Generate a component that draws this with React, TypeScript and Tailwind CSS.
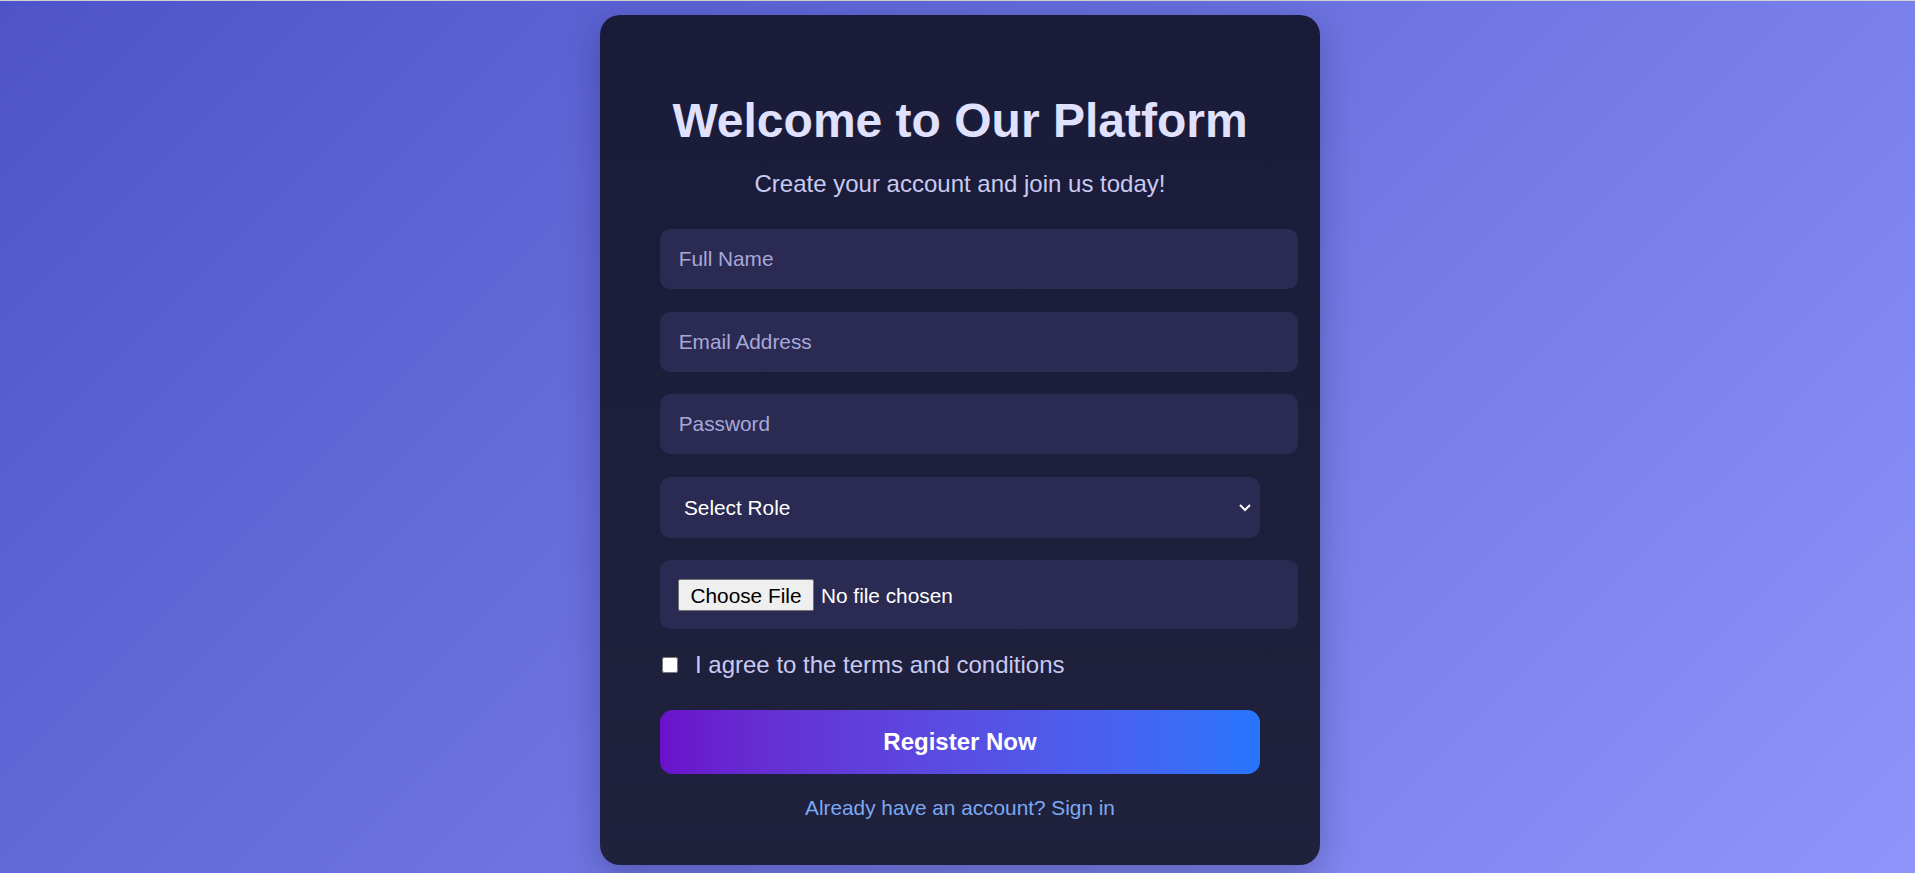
import React from "react";

const App = () => {
  return (
    <div className="min-h-screen border-t border-[#d3d3d3] bg-linear-135 from-[#4e54c8] to-[#8f94fb] font-['Liberation_Sans',Arial,sans-serif]">
      <div className="flex justify-center pt-[14px] pl-[5px]">
        <div className="w-[720px] rounded-[20px] bg-linear-to-b from-[#1a1b38] to-[#20213d] px-[60px] pt-[78px] pb-[45px] shadow-[0_10px_35px_rgba(20,20,60,0.3)]">
          <h1 className="text-center text-[48px] leading-[55px] font-bold text-[#e0e1ff]">
            Welcome to Our Platform
          </h1>
          <p className="mt-[22px] text-center text-[24px] leading-[27.6px] text-[#c9caf2]">
            Create your account and join us today!
          </p>

          <form className="mt-[31.5px]" onSubmit={(e) => e.preventDefault()}>
            <input
              type="text"
              placeholder="Full Name"
              className="mb-[22.5px] block h-[60px] w-[637.5px] rounded-[10px] bg-[#2b2a52] px-[18.75px] text-[20.8px] text-white outline-none placeholder:text-[#a7a8d8]"
            />
            <input
              type="email"
              placeholder="Email Address"
              className="mb-[22.5px] block h-[60px] w-[637.5px] rounded-[10px] bg-[#2b2a52] px-[18.75px] text-[20.8px] text-white outline-none placeholder:text-[#a7a8d8]"
            />
            <input
              type="password"
              placeholder="Password"
              className="mb-[22.5px] block h-[60px] w-[637.5px] rounded-[10px] bg-[#2b2a52] px-[18.75px] text-[20.8px] text-white outline-none placeholder:text-[#a7a8d8]"
            />
            <div className="relative mb-[22.5px]">
              <select
                defaultValue=""
                className="block h-[61px] w-full appearance-none rounded-[10px] bg-[#2b2a52] pl-[24px] pr-[40px] text-[20.8px] text-white outline-none"
              >
                <option value="" disabled>Select Role</option>
                <option value="student">Student</option>
                <option value="teacher">Teacher</option>
              </select>
              <svg
                className="pointer-events-none absolute right-[8px] top-[26px] h-[9px] w-[14px]"
                viewBox="0 0 14 9"
                fill="none"
              >
                <path d="M2 2l5 5 5-5" stroke="#ffffff" strokeWidth="2" />
              </svg>
            </div>
            <div className="mb-[22.5px] flex h-[69px] w-[637.5px] items-center rounded-[10px] bg-[#2b2a52] pl-[18px]">
              <input
                type="file"
                className="text-[20.8px] text-white file:mr-[7px] file:h-[32px] file:rounded-[2px] file:border file:border-[#767676] file:bg-[#efefef] file:px-[11.5px] file:text-black"
              />
            </div>
            <label className="flex h-[27.6px] items-center text-[24px] text-[#c9caf2]">
              <input type="checkbox" className="ml-[2px] mr-[17px] h-4 w-4" />
              I agree to the terms and conditions
            </label>

            <button
              type="submit"
              className="mt-[31px] block h-[64px] w-full rounded-[12.5px] bg-linear-to-r from-[#6a11cb] to-[#2575fc] text-[24px] font-bold text-white"
            >
              Register Now
            </button>
          </form>

          <p className="mt-[22px] text-center text-[20.8px] leading-[24px] text-[#7ca9f2]">
            Already have an account? Sign in
          </p>
        </div>
      </div>
    </div>
  );
};

export default App;
